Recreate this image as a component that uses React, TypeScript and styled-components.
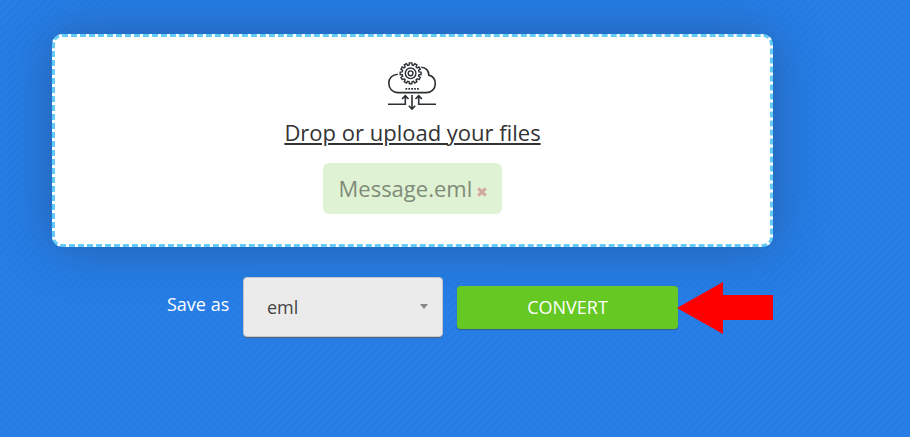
import React from "react";
import styled, { createGlobalStyle } from "styled-components";

const GlobalStyle = createGlobalStyle`
  * { box-sizing: border-box; }
  body {
    margin: 0;
    background: #267de5;
    font-family: "Open Sans", sans-serif;
    overflow: hidden;
  }
`;

const Page = styled.main`
  height: 437px;
  padding: 34px 0 0 52px;
  background: repeating-linear-gradient(
    135deg,
    #267ee6 0,
    #267ee6 3.6px,
    #2479df 4.6px,
    #267ee6 5.657px
  );
`;

const DropZone = styled.section`
  display: flex;
  flex-direction: column;
  align-items: center;
  width: 721px;
  height: 213px;
  padding-top: 25px;
  border: 3px dashed #64cbf5;
  border-radius: 10px;
  background: #fff;
  box-shadow: 0 0 50px rgba(40, 50, 80, 0.4);
`;

const CloudIcon = styled.svg`
  width: 48px;
  height: 48px;
  flex: none;
  margin-right: 1px;
  overflow: visible;
  fill: none;
  stroke: #2b3033;
  stroke-width: 1.6;
`;

const UploadLink = styled.a`
  margin-top: 7px;
  color: #333;
  font-size: 22px;
  line-height: 30px;
  white-space: nowrap;
  text-decoration: underline;
  text-decoration-thickness: 2px;
  text-underline-offset: 2px;
`;

const FileChip = styled.div`
  display: flex;
  align-items: center;
  width: 179px;
  height: 51px;
  margin-top: 16px;
  padding: 0 0 2px 15.5px;
  border-radius: 6px;
  background: #dff2d3;
  color: #7f8b79;
  font-size: 22px;
  line-height: 30px;
`;

const RemoveIcon = styled.svg`
  width: 10px;
  height: 10px;
  margin: 9px 0 0 4.5px;
  fill: none;
  stroke: #d2aa9c;
  stroke-width: 3.2;
`;

const Controls = styled.div`
  display: flex;
  align-items: flex-start;
  margin: 30px 0 0 115px;
`;

const SaveLabel = styled.label`
  width: 76px;
  padding-top: 15px;
  color: #fff;
  font-size: 18px;
  line-height: 25px;
  white-space: nowrap;
`;

const FormatSelect = styled.div`
  display: flex;
  align-items: center;
  justify-content: space-between;
  width: 200px;
  height: 60px;
  padding: 0 14px 0 23px;
  border: 1px solid #c3c5c9;
  border-radius: 4px;
  background: #ebebeb;
  box-shadow: 0 2px 1px -1px #5c6470;
  color: #444;
  font-size: 18px;
`;

const Caret = styled.svg`
  width: 8px;
  height: 5px;
  margin-bottom: 2px;
  fill: #888;
`;

const ConvertButton = styled.button`
  width: 221px;
  height: 43px;
  margin: 9px 0 0 14px;
  padding: 0;
  border: 0;
  border-radius: 4px;
  background: #66c823;
  box-shadow: 0 1px 1px rgba(70, 80, 90, 0.65);
  color: #fff;
  font: 18px/43px "Open Sans", sans-serif;
`;

const Arrow = styled.svg`
  width: 96px;
  height: 52px;
  margin: 5px 0 0 -1px;
  fill: #f00;
`;

const TOOTH_COUNT = 12;

function gearPath(cx: number, cy: number) {
  const points: string[] = [];
  for (let i = 0; i < TOOTH_COUNT; i++) {
    const base = (i * 2 * Math.PI) / TOOTH_COUNT;
    const corners: [number, number][] = [
      [-0.17, 8.5],
      [-0.12, 10.5],
      [0.12, 10.5],
      [0.17, 8.5],
    ];
    for (const [offset, radius] of corners) {
      const x = cx + Math.sin(base + offset) * radius;
      const y = cy - Math.cos(base + offset) * radius;
      points.push(`${x.toFixed(2)} ${y.toFixed(2)}`);
    }
  }
  return `M${points.join("L")}Z`;
}

export default function App() {
  return (
    <>
      <GlobalStyle />
      <Page>
        <DropZone>
          <CloudIcon viewBox="0 0 48 48" aria-hidden="true">
            <path d="M9.8 12.2C4 12.5.8 16.4.8 21.2c0 5.6 4.1 9.4 9.2 9.4h28.2c5.4 0 9.1-3.8 9.1-8.8 0-4.5-2.4-7.7-6.5-8.7.2-4.3-3-7.8-7.6-7.9" />
            <path d={gearPath(22.6, 11.3)} strokeWidth="1.4" />
            <circle cx="22.6" cy="11.3" r="5.3" strokeWidth="1.4" />
            <circle cx="22.6" cy="11.3" r="2.4" strokeWidth="1.4" />
            <path d="M17.5 26.9h13.4" strokeDasharray="1.7 1.2" />
            <path d="M0 42.2h17.3v-8M14.1 37l3.2-3.3 3.2 3.3M48 42.2H30.7v-8M27.5 37l3.2-3.3 3.2 3.3M24 33v13.6M20.8 43.7l3.2 3.3 3.2-3.3" />
          </CloudIcon>
          <UploadLink>Drop or upload your files</UploadLink>
          <FileChip>
            Message.eml
            <RemoveIcon viewBox="0 0 10 10" aria-label="Remove">
              <path d="M1.3 1.3l7.4 7.4M8.7 1.3L1.3 8.7" />
            </RemoveIcon>
          </FileChip>
        </DropZone>
        <Controls>
          <SaveLabel>Save as</SaveLabel>
          <FormatSelect>
            eml
            <Caret viewBox="0 0 8 5" aria-hidden="true">
              <path d="M0 0h8L4 5z" />
            </Caret>
          </FormatSelect>
          <ConvertButton>CONVERT</ConvertButton>
          <Arrow viewBox="0 0 96 52" aria-hidden="true">
            <path d="M0 26L46 0v13h50v25H46v14z" />
          </Arrow>
        </Controls>
      </Page>
    </>
  );
}
